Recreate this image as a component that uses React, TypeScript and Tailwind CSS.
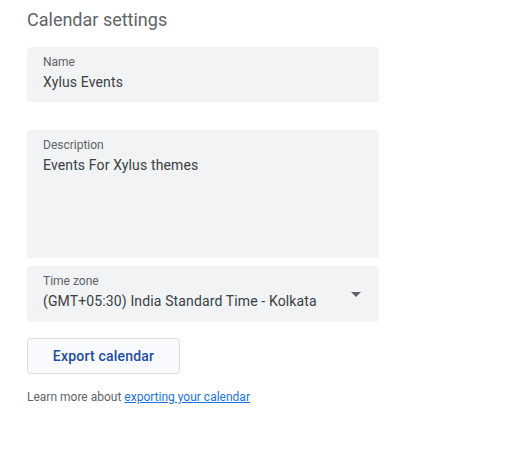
export default function App() {
  return (
    <div className="h-[451px] w-[510px] bg-white font-['Roboto',sans-serif]">
      <div className="w-[352px] pl-[27px] pt-[7px] box-content">
        <h1 className="text-[18px] leading-[26px] text-[#5f6368]">Calendar settings</h1>

        <div className="mt-[14px] h-[55px] rounded-t-[4px] bg-[#f1f3f4] px-4 pt-[7px]">
          <div className="text-[12px] leading-[16px] text-[#5f6368]">Name</div>
          <div className="mt-[2px] text-[14px] leading-[20px] tracking-[0.13px] text-[#3c4043]">Xylus Events</div>
        </div>

        <div className="mt-[28px] h-[128px] rounded-t-[4px] bg-[#f1f3f4] px-4 pt-[7px]">
          <div className="text-[12px] leading-[16px] text-[#5f6368]">Description</div>
          <div className="mt-[2px] text-[14px] leading-[20px] tracking-[0.13px] text-[#3c4043]">Events For Xylus themes</div>
        </div>

        <div className="mt-[8px] flex h-[56px] items-start justify-between rounded-[4px] bg-[#f1f3f4] pl-4 pr-[18px] pt-[7px]">
          <div>
            <div className="text-[12px] leading-[16px] text-[#5f6368]">Time zone</div>
            <div className="mt-[2px] text-[14px] leading-[20px] tracking-[0.13px] text-[#3c4043]">
              (GMT+05:30) India Standard Time - Kolkata
            </div>
          </div>
          <svg width="10" height="5" viewBox="0 0 10 5" className="mt-[19px]">
            <path d="M0 0h10L5 5z" fill="#5f6368" />
          </svg>
        </div>

        <button
          type="button"
          className="mt-[16px] h-[36px] w-[153px] rounded-[4px] border border-[#dadce0] bg-[#f8fafd] text-[14px] font-medium tracking-[0.2px] text-[#1f4ba5]"
        >
          Export calendar
        </button>

        <p className="mt-[15px] text-[12px] leading-[16px] text-[#5f6368]">
          Learn more about{" "}
          <a href="#" className="text-[#1a73e8] underline">
            exporting your calendar
          </a>
        </p>
      </div>
    </div>
  );
}
